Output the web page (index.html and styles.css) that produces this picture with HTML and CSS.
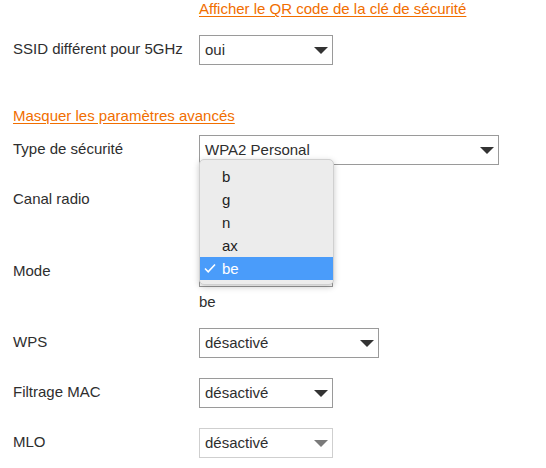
FILE: index.html
```html
<!DOCTYPE html>
<html lang="fr">
<head>
<meta charset="utf-8">
<title>Paramètres Wi-Fi</title>
<link rel="stylesheet" href="styles.css">
</head>
<body>
<div class="page">
  <a class="link link-qr" href="#">Afficher le QR code de la clé de sécurité</a>

  <div class="row row-ssid">
    <div class="label">SSID différent pour 5GHz</div>
    <div class="field">
      <div class="select w-small"><span class="value">oui</span><svg class="arrow" viewBox="0 0 14 7"><path d="M0 0H14L7 7Z"/></svg></div>
    </div>
  </div>

  <a class="link link-adv" href="#">Masquer les paramètres avancés</a>

  <div class="row row-type">
    <div class="label">Type de sécurité</div>
    <div class="field">
      <div class="select w-large"><span class="value">WPA2 Personal</span><svg class="arrow" viewBox="0 0 14 7"><path d="M0 0H14L7 7Z"/></svg></div>
    </div>
  </div>

  <div class="row">
    <div class="label">Canal radio</div>
    <div class="field">
      <div class="select w-small"><span class="value"></span><svg class="arrow" viewBox="0 0 14 7"><path d="M0 0H14L7 7Z"/></svg></div>
      <div class="hint"></div>
    </div>
  </div>

  <div class="row row-mode">
    <div class="label">Mode</div>
    <div class="field">
      <div class="select w-small"><span class="value"></span><svg class="arrow" viewBox="0 0 14 7"><path d="M0 0H14L7 7Z"/></svg></div>
      <div class="hint">be</div>
      <ul class="menu">
        <li class="menu-item">b</li>
        <li class="menu-item">g</li>
        <li class="menu-item">n</li>
        <li class="menu-item">ax</li>
        <li class="menu-item is-selected"><svg class="check" viewBox="0 0 23 23"><path d="M5 11.5L8.2 14.8L15 7.5"/></svg>be</li>
      </ul>
    </div>
  </div>

  <div class="row row-wps">
    <div class="label">WPS</div>
    <div class="field">
      <div class="select w-medium"><span class="value">désactivé</span><svg class="arrow" viewBox="0 0 14 7"><path d="M0 0H14L7 7Z"/></svg></div>
    </div>
  </div>

  <div class="row">
    <div class="label">Filtrage MAC</div>
    <div class="field">
      <div class="select w-small"><span class="value">désactivé</span><svg class="arrow" viewBox="0 0 14 7"><path d="M0 0H14L7 7Z"/></svg></div>
    </div>
  </div>

  <div class="row">
    <div class="label">MLO</div>
    <div class="field">
      <div class="select w-small is-disabled"><span class="value">désactivé</span><svg class="arrow" viewBox="0 0 14 7"><path d="M0 0H14L7 7Z"/></svg></div>
    </div>
  </div>
</div>
</body>
</html>
```

FILE: styles.css
```css
html, body {
  margin: 0;
  padding: 0;
  background: #ffffff;
}

body {
  font-family: "Liberation Sans", Arial, Helvetica, sans-serif;
  font-size: 15px;
  line-height: 18px;
  color: #2e2e2e;
}

.page {
  padding: 0 0 0 13px;
}

.link {
  display: block;
  width: fit-content;
  color: #f16e00;
  text-decoration: underline;
  text-underline-offset: 2px;
}

.link-qr {
  margin-left: 186px;
}

.link-adv {
  margin-top: 42px;
}

.row {
  display: grid;
  grid-template-columns: 186px auto;
  align-items: start;
  margin-top: 20px;
}

.row-ssid {
  margin-top: 17px;
}

.row-type {
  margin-top: 10px;
}

.row-mode {
  margin-top: 18px;
}

.row-wps {
  margin-top: 17px;
}

.label {
  padding-top: 5px;
}

.field {
  position: relative;
}

.select {
  box-sizing: border-box;
  height: 30px;
  border: 1px solid #9a9a9a;
  background: #ffffff;
  display: flex;
  align-items: center;
  justify-content: space-between;
  padding: 0 4px 0 5px;
}

.w-small {
  width: 134px;
}

.w-medium {
  width: 180px;
}

.w-large {
  width: 300px;
}

.value {
  white-space: nowrap;
}

.arrow {
  width: 14px;
  height: 7px;
  fill: #333333;
  margin-top: 1px;
}

.select.is-disabled {
  border-color: #cfcfcf;
}

.select.is-disabled .arrow {
  fill: #7a7a7a;
}

.hint {
  height: 18px;
  margin-top: 6px;
}

.menu {
  position: absolute;
  left: 0;
  top: -98px;
  width: 135px;
  box-sizing: border-box;
  margin: 0;
  padding: 5px 0 4px;
  list-style: none;
  background: #ececec;
  border: 1px solid #d0d0d0;
  border-radius: 5px;
  box-shadow: 0 2px 6px rgba(0, 0, 0, 0.22);
  color: #1e1e1e;
}

.menu-item {
  position: relative;
  height: 23px;
  line-height: 23px;
  padding-left: 22px;
}

.menu-item.is-selected {
  background: #4a9cfa;
  color: #ffffff;
}

.check {
  position: absolute;
  left: 0;
  top: 0;
  width: 23px;
  height: 23px;
  fill: none;
  stroke: #ffffff;
  stroke-width: 1.6;
}
```
